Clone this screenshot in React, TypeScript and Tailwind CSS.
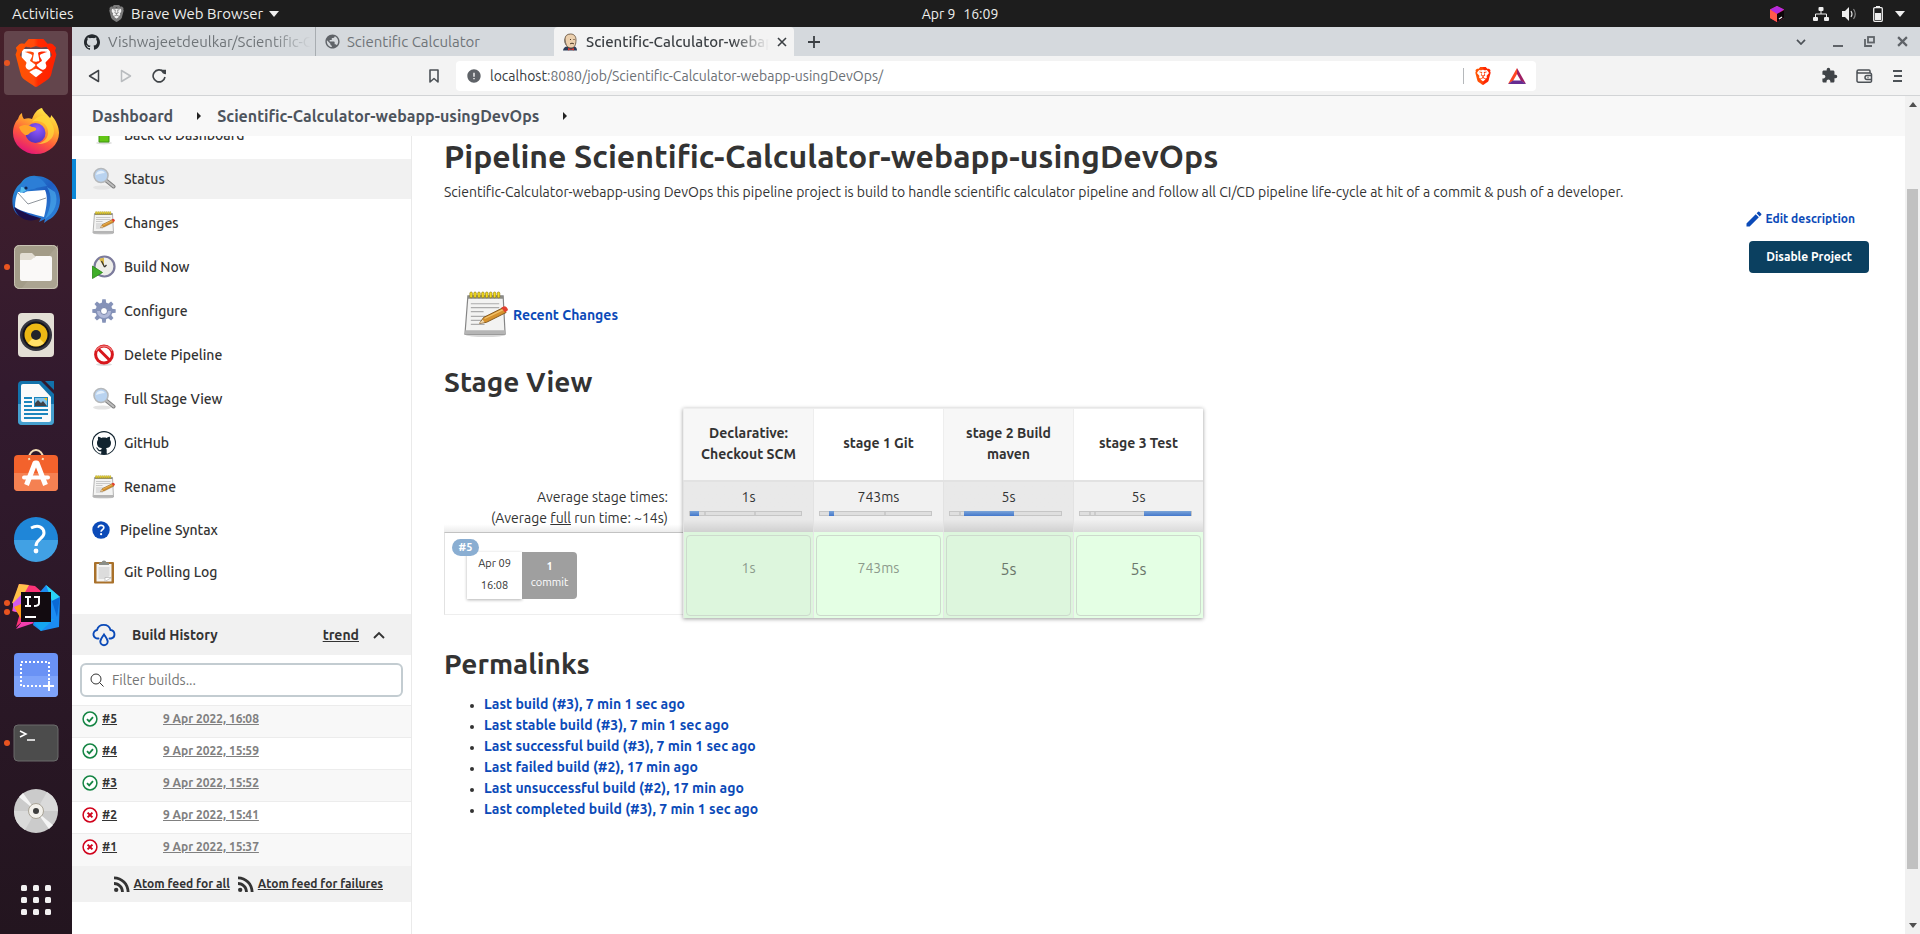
import React from "react";
import { SiBrave, SiGithub } from "react-icons/si";
import { MdExtension, MdEdit, MdRssFeed, MdPublic, MdError } from "react-icons/md";

/* ---------- small drawings ---------- */

function BraveLion({ size, plain }: { size: number; plain?: boolean }) {
  return (
    <svg viewBox="0 0 24 24" width={size} height={size} aria-hidden="true">
      <defs>
        <linearGradient id="lion" x1="0" y1="0" x2="1" y2="0">
          <stop offset="0" stopColor="#ff5500" />
          <stop offset="0.45" stopColor="#ff4a0c" />
          <stop offset="0.55" stopColor="#ff2a00" />
          <stop offset="1" stopColor="#ff2000" />
        </linearGradient>
      </defs>
      <path d="M5 5 L19 5 L19.5 14 L12 21 L4.5 14Z" fill={plain ? "#f2f2f2" : "#fff"} />
      <SiBrave size={24} fill={plain ? "#7d7d7d" : "url(#lion)"} />
    </svg>
  );
}

function Firefox() {
  return (
    <svg viewBox="0 0 48 48" width="48" height="48" aria-hidden="true">
      <defs>
        <linearGradient id="fox" x1="0.8" y1="0" x2="0.3" y2="1">
          <stop offset="0" stopColor="#fff44f" />
          <stop offset="0.35" stopColor="#ffb02e" />
          <stop offset="0.65" stopColor="#ff5a3c" />
          <stop offset="1" stopColor="#e2127a" />
        </linearGradient>
        <radialGradient id="orb" cx="0.6" cy="0.3" r="0.8">
          <stop offset="0" stopColor="#9059ff" />
          <stop offset="1" stopColor="#4a2fb8" />
        </radialGradient>
      </defs>
      <path
        d="M30 1c2 5 6 7 8 10c1-1 1-2 1-3c5 5 8 12 8 18a23 21 0 0 1-46 0c0-6 2-11 5-14c1-3 2-5 4-6c0 3 1 5 2 6c3-1 6-1 8 0c2-5 5-10 10-11z"
        fill="url(#fox)"
      />
      <circle cx="23.5" cy="26" r="10" fill="url(#orb)" />
      <path d="M7 20c5-3 10-2 13 0c3 0 5 1 4 3c-2 2-5 1-7 4c-1 1-3 1-4 1c-3-2-5-5-6-8z" fill="#ffa42a" />
      <path d="M20 15c6-3 15 0 16 9c1 7-5 12-11 13c9 1 17-5 17-13c0-6-4-10-7-14c-4-3-11 0-15 5z" fill="#ffd83a" opacity="0.75" />
    </svg>
  );
}

function Thunderbird() {
  return (
    <svg viewBox="0 0 48 48" width="48" height="48" aria-hidden="true">
      <defs>
        <linearGradient id="bird" x1="0" y1="0" x2="1" y2="1">
          <stop offset="0" stopColor="#2a9be0" />
          <stop offset="0.5" stopColor="#1f5dc0" />
          <stop offset="1" stopColor="#2f8ae0" />
        </linearGradient>
      </defs>
      <path
        d="M9 8c3-5 9-8 15-7c14 0 24 11 24 24c0 9-5 17-12 20l-4 3l1-4l-6 3l2-4C14 45 4 43 1 32C-1 23 2 13 9 8z"
        fill="url(#bird)"
      />
      <path d="M2 32c4 3 10 5 16 8l10 3c-8 5-22 3-26-11z" fill="#1c0f4a" />
      <path d="M6 17l27-2c3 6 2 16-1 27C22 39 9 37 3 32C3 26 4 21 6 17z" fill="#fff" />
      <path d="M6 18l10 11l18-6" fill="none" stroke="#8f959c" strokeWidth="1" />
      <path d="M8 17C9 9 15 2 23 2c7 1 9 5 12 9c-5 1-9 1-13 3c-4 0-7 2-10 4z" fill="#2c7ed6" />
      <path d="M8 18l1-6c3 0 5 2 5 4z" fill="#5ac0ee" />
      <circle cx="14" cy="13" r="1.6" fill="#10244f" />
      <path d="M35 12c5 7 5 20-2 32c10-6 14-18 10-27z" fill="#49a7ea" opacity="0.7" />
    </svg>
  );
}

function Files() {
  return (
    <svg viewBox="0 0 46 46" width="46" height="46" aria-hidden="true">
      <rect x="1" y="1" width="44" height="44" rx="5" fill="#a39c88" />
      <path d="M45 1v40a4 4 0 0 1-4 4H8z" fill="#b0aa98" opacity="0.6" />
      <rect x="1.5" y="1.5" width="43" height="43" rx="5" fill="none" stroke="#c9c3b4" />
      <path d="M7 11a2 2 0 0 1 2-2h10l4 4h-2v6H7z" fill="#e2ddd3" />
      <path d="M7 16h11l5-4h14a2 2 0 0 1 2 2v21a2 2 0 0 1-2 2H9a2 2 0 0 1-2-2z" fill="#faf9f8" />
    </svg>
  );
}

function Speaker() {
  return (
    <svg viewBox="0 0 46 46" width="46" height="46" aria-hidden="true">
      <rect x="5" y="1" width="36" height="44" rx="4" fill="#e3dfd5" />
      <circle cx="23" cy="23" r="16" fill="#35363f" />
      <circle cx="23" cy="23" r="13.5" fill="#14141a" />
      <circle cx="23" cy="23" r="11.5" fill="#ecb915" />
      <path d="M15 31a11.5 11.5 0 0 0 16 0L23 23z" fill="#ffe068" />
      <circle cx="23" cy="23" r="5" fill="#22242a" />
    </svg>
  );
}

function Writer() {
  return (
    <svg viewBox="0 0 46 46" width="46" height="46" aria-hidden="true">
      <path d="M9 1h19l13 13v27a4 4 0 0 1-4 4H9a4 4 0 0 1-4-4V5a4 4 0 0 1 4-4z" fill="#1272ab" />
      <path d="M5 24h36v17a4 4 0 0 1-4 4H9a4 4 0 0 1-4-4z" fill="#46a0cf" />
      <path d="M32 1h9v9z" fill="#1272ab" />
      <path d="M10 4h16l12 13v23a2 2 0 0 1-2 2H10a2 2 0 0 1-2-2V6a2 2 0 0 1 2-2z" fill="#fafafa" />
      <path d="M11 18h8M11 22h8M11 26h8M11 30h24M11 34h24M11 38h18" stroke="#1c86bd" strokeWidth="2" />
      <rect x="21" y="17" width="14" height="10" fill="#1c86bd" />
      <rect x="22" y="18" width="12" height="8" fill="#83c4ea" />
      <path d="M22 26v-3l3-3l3 3l2-2l4 5z" fill="#3f4247" />
      <path d="M31 18h3v3z" fill="#f5c211" />
    </svg>
  );
}

function Software() {
  return (
    <svg viewBox="0 0 46 46" width="46" height="46" aria-hidden="true">
      <path d="M16 10a7 8 0 0 1 14 0" fill="none" stroke="#f7e0b8" strokeWidth="2" />
      <rect x="1" y="7" width="44" height="36" rx="4" fill="#f3622c" />
      <path d="M1 25h44v14a4 4 0 0 1-4 4H5a4 4 0 0 1-4-4z" fill="#f58152" />
      <path d="M16 10a7 8 0 0 0 .5 2M30 10a7 8 0 0 1-.5 2" fill="none" stroke="#f7e0b8" strokeWidth="2" />
      <path d="M13.500 37L22 15h2l8.500 22" fill="none" stroke="#fff" strokeWidth="5" strokeLinejoin="round" />
      <path d="M11 29.500h24" stroke="#fff" strokeWidth="4" strokeLinecap="round" />
    </svg>
  );
}

function HelpApp() {
  return (
    <svg viewBox="0 0 46 46" width="46" height="46" aria-hidden="true">
      <circle cx="23" cy="23" r="22" fill="#1f86d8" />
      <path d="M1 24a22 22 0 0 0 44 0z" fill="#41a1e4" />
      <path d="M18 12c8-4 13 0 13 5c0 6-8 6-8 13" fill="none" stroke="#fff" strokeWidth="3" />
      <circle cx="23" cy="35" r="2.400" fill="#fff" />
    </svg>
  );
}

function IntelliJ() {
  return (
    <svg viewBox="0 0 48 48" width="48" height="48" aria-hidden="true">
      <path d="M7 1l16 2l8 7L20 30L4 44l4-14L0 28l2-9z" fill="#fc3378" />
      <path d="M7 1l10 1L6 22L0 20z" fill="#ffc24a" />
      <path d="M1 20l8-8v18L1 28z" fill="#d25cf0" />
      <path d="M2 24l7-3v15z" fill="#ff9b1a" />
      <path d="M28 9l6-7l14 12l-1 30l-18 4l-8-6z" fill="#1b8cf2" />
      <path d="M34 2l14 12l-8 4z" fill="#2ad4f5" />
      <path d="M40 18l8-4l-3 20z" fill="#0a6ad6" />
      <path d="M22 40l20-4l-13 12z" fill="#14a5f0" />
      <path d="M9 30v10l-5 6l18-6z" fill="#f43fb0" />
      <rect x="9" y="9" width="30" height="30" fill="#120b10" />
      <path d="M13 14h6M16 14v9M13 23h6M22 14h5v6q0 3-5 3" fill="none" stroke="#fff" strokeWidth="2" />
      <path d="M13 34h11" stroke="#fff" strokeWidth="2" />
    </svg>
  );
}

function ScreenshotApp() {
  return (
    <svg viewBox="0 0 46 46" width="46" height="46" aria-hidden="true">
      <rect x="1" y="1" width="44" height="44" rx="4" fill="#6a92f5" />
      <path d="M1 24h44v17a4 4 0 0 1-4 4H5a4 4 0 0 1-4-4z" fill="#7ea3fa" />
      <rect x="8" y="10" width="28" height="24" fill="none" stroke="#fff" strokeWidth="2" strokeDasharray="2 2" />
      <path d="M36 29v10M31 34h10" stroke="#fff" strokeWidth="2" />
    </svg>
  );
}

function TerminalApp() {
  return (
    <svg viewBox="0 0 46 46" width="46" height="46" aria-hidden="true">
      <rect x="1" y="5" width="44" height="36" rx="4" fill="#4c4c4c" stroke="#6b6b6b" />
      <path d="M7 11l6 3l-6 3M14 20h8" fill="none" stroke="#fff" strokeWidth="1.500" />
    </svg>
  );
}

function Disc() {
  return (
    <svg viewBox="0 0 46 46" width="46" height="46" aria-hidden="true">
      <circle cx="23" cy="23" r="22" fill="#cbcbcb" />
      <path d="M23 23L6 9L10 5zM23 23L40 37L36 41z" fill="#f4f4f4" />
      <path d="M23 23L1 23A22 22 0 0 0 12 42zM23 23L45 23A22 22 0 0 0 34 4z" fill="#dadada" />
      <circle cx="23" cy="23" r="7.500" fill="#f3f1ec" stroke="#a9a396" />
      <circle cx="23" cy="23" r="3" fill="#3e3e3e" />
    </svg>
  );
}

function AppGrid() {
  return (
    <svg viewBox="0 0 32 32" width="32" height="32" aria-hidden="true" fill="#f2f0f1">
      {[1, 13, 25].map((y) =>
        [1, 13, 25].map((x) => <rect key={`${x}-${y}`} x={x} y={y} width="6" height="6" rx="1.500" />)
      )}
    </svg>
  );
}

function Magnifier() {
  return (
    <svg viewBox="0 0 24 24" width="24" height="24" aria-hidden="true">
      <ellipse cx="10" cy="20.500" rx="9" ry="2" fill="#e4e4e4" />
      <path d="M13.500 13L21.500 19.500" stroke="#7f7f7f" strokeWidth="4" strokeLinecap="round" />
      <path d="M13.500 13L21.500 19.500" stroke="#bdbdbd" strokeWidth="2" strokeLinecap="round" />
      <circle cx="9" cy="8.500" r="7" fill="#b9d3f0" stroke="#b5b8bb" strokeWidth="1.600" />
      <path d="M4 8a5 5 0 0 1 9-2c-3 0-6 1-9 2z" fill="#e3effb" />
    </svg>
  );
}

function Notepad({ size = 24 }: { size?: number }) {
  return (
    <svg viewBox="0 0 48 48" width={size} height={size} aria-hidden="true">
      <ellipse cx="23" cy="45" rx="20" ry="2" fill="#d8d8d8" />
      <path d="M5 5h36l2 39H2z" fill="#f3f3f2" stroke="#858585" strokeWidth="1.200" />
      <path d="M2.500 40h40l.5 4H2z" fill="#b5b5b5" />
      <path d="M5 5h36v3H5z" fill="#8c8c86" />
      {[7, 11, 15, 19, 23, 27, 31, 35].map((x) => (
        <rect key={x} x={x} y="1" width="2.600" height="6" rx="1.300" fill="#f4dc1e" stroke="#857108" strokeWidth="0.600" />
      ))}
      <path d="M8 13h29M8 17h29M8 21h13M8 26h21M8 30h16M8 34h14" stroke="#acacac" strokeWidth="1.200" />
      <path d="M17 33l4-6l20-10l3 5l-20 10z" fill="#d6922d" stroke="#7a4d12" strokeWidth="0.900" />
      <path d="M22 28l19-9" stroke="#f3c46e" strokeWidth="1.200" />
      <path d="M39 17l3-1.500q3 0 4 4L43 22z" fill="#e2402f" />
      <path d="M17 33l3-4l2 3z" fill="#f0d9b0" />
    </svg>
  );
}

function BuildClock() {
  return (
    <svg viewBox="0 0 24 24" width="24" height="24" aria-hidden="true">
      <circle cx="12.500" cy="11.500" r="10" fill="#eeeeea" stroke="#7c7b9c" strokeWidth="2.200" />
      <path d="M12 12L7 4a8 8 0 0 1 5-1z" fill="#d9b84a" />
      <path d="M12.500 12l-3-6M12.500 12l2-2" stroke="#333" strokeWidth="1.200" />
      <path d="M.500 11l10 6.500l-10 6z" fill="#3fae29" stroke="#2a8416" strokeWidth="0.800" />
    </svg>
  );
}

function Gear() {
  return (
    <svg viewBox="0 0 24 24" width="24" height="24" aria-hidden="true">
      <g fill="#8592b8">
        {[0, 45, 90, 135, 180, 225, 270, 315].map((a) => (
          <path key={a} d="M9.500 6L10.300 0.300h3.400L14.500 6z" transform={`rotate(${a} 12 12)`} />
        ))}
        <circle cx="12" cy="12" r="8.500" />
      </g>
      <path d="M5 12a7 7 0 0 0 14 0z" fill="#b1b9d8" />
      <circle cx="12" cy="12" r="3.500" fill="#fff" stroke="#7784aa" />
    </svg>
  );
}

function NoEntry() {
  return (
    <svg viewBox="0 0 24 24" width="24" height="24" aria-hidden="true">
      <ellipse cx="12" cy="21.500" rx="8" ry="1.500" fill="#ddd" />
      <circle cx="12" cy="11.500" r="8.400" fill="#fff" stroke="#d8171c" strokeWidth="3" />
      <path d="M6.500 6l11 11" stroke="#d8171c" strokeWidth="3" />
      <path d="M4 8a9 9 0 0 1 16 0" fill="none" stroke="#ef7d7d" strokeWidth="1.400" />
    </svg>
  );
}

function OctoRound() {
  return (
    <span className="flex size-6 items-center justify-center rounded-full bg-[#11232f]">
      <SiGithub size={22} color="#fff" />
    </span>
  );
}

function HelpDot() {
  return (
    <svg viewBox="0 0 18 18" width="18" height="18" aria-hidden="true">
      <circle cx="9" cy="9" r="8.700" fill="#0b4ab8" />
      <path d="M6.300 6.800c0-3.400 5.600-3.300 5.500 0c0 1.900-2.700 1.900-2.700 4" fill="none" stroke="#fff" strokeWidth="1.700" />
      <circle cx="9.100" cy="13.200" r="1.100" fill="#fff" />
    </svg>
  );
}

function Clipboard() {
  return (
    <svg viewBox="0 0 24 24" width="24" height="24" aria-hidden="true">
      <rect x="2" y="2" width="20" height="21.500" rx="1" fill="#a9712a" />
      <rect x="4.500" y="4" width="15" height="17.500" fill="#f4f4f3" />
      <path d="M6.500 7h11v9l-4 3h-7z" fill="#dcdcdc" />
      <path d="M13 21.500v-4h6.500z" fill="#fff" stroke="#aaa" strokeWidth="0.600" />
      <path d="M7 5V2.500h2.500Q10 .5 12 .5t2.500 2H17V5z" fill="#8b8e88" />
    </svg>
  );
}

function UpArrow() {
  return (
    <svg viewBox="0 0 24 24" width="24" height="24" aria-hidden="true">
      <ellipse cx="12" cy="20" rx="8" ry="1.500" fill="#ddd" />
      <path d="M12 1l9 9h-4v9H7v-9H3z" fill="#62c615" stroke="#3c9410" />
    </svg>
  );
}

function CloudDrop() {
  return (
    <svg viewBox="0 0 24 24" width="24" height="24" aria-hidden="true" fill="none" stroke="#0b4ab8" strokeWidth="1.900">
      <path d="M6.500 16.500A4.300 4.300 0 0 1 5 8a7 7 0 0 1 13.500 0a4.300 4.300 0 0 1 .5 8.500h-1.500" strokeLinecap="round" transform="translate(0 -1)" />
      <path d="M12 11.500c2 3 3.700 5 3.700 7a3.700 3.700 0 0 1-7.400 0c0-2 1.700-4 3.700-7z" />
    </svg>
  );
}

function StatusIcon({ ok }: { ok: boolean }) {
  const tone = ok ? "#158544" : "#d0021b";
  return (
    <svg viewBox="0 0 16 16" width="16" height="16" role="img" aria-label={ok ? "Success" : "Failed"}>
      <circle cx="8" cy="8" r="6.900" fill="#fff" stroke={tone} strokeWidth="1.500" />
      {ok ? (
        <path d="M5 8.200l2.200 2.200L11 6.200" fill="none" stroke={tone} strokeWidth="1.800" />
      ) : (
        <path d="M5.600 5.600l4.800 4.800M10.400 5.600l-4.800 4.800" stroke={tone} strokeWidth="2" />
      )}
    </svg>
  );
}

function Butler() {
  return (
    <svg viewBox="0 0 16 18" width="16" height="18" aria-hidden="true">
      <path d="M1 17.500c0-2 2-4 4-4h7c2 0 3 2 3 4z" fill="#2c3c58" />
      <path d="M3 6c0-3 2-5 5.500-5S14 3 14 7s-1 8-5 8s-6-4-6-9z" fill="#ecd0ae" stroke="#5a4632" strokeWidth="0.800" />
      <path d="M2.500 5c-1 3 0 6 2 8c0-3-1-5-2-8z" fill="#7f7569" />
      <path d="M8 6.500h1M11.500 6.500h1M8 11c1-1 3-1 4 0" stroke="#4a3826" strokeWidth="1" fill="none" />
      <path d="M6 15l3 1l3-1v2.500l-3-1l-3 1z" fill="#d33833" />
    </svg>
  );
}

/* ---------- data ---------- */

const dockApps = [
  { name: "Brave", icon: <BraveLion size={48} />, dots: 1, active: true },
  { name: "Firefox", icon: <Firefox />, dots: 0 },
  { name: "Thunderbird", icon: <Thunderbird />, dots: 0 },
  { name: "Files", icon: <Files />, dots: 1 },
  { name: "Rhythmbox", icon: <Speaker />, dots: 0 },
  { name: "LibreOffice Writer", icon: <Writer />, dots: 0 },
  { name: "Ubuntu Software", icon: <Software />, dots: 0 },
  { name: "Help", icon: <HelpApp />, dots: 0 },
  { name: "IntelliJ IDEA", icon: <IntelliJ />, dots: 2 },
  { name: "Screenshot", icon: <ScreenshotApp />, dots: 0 },
  { name: "Terminal", icon: <TerminalApp />, dots: 1 },
  { name: "Disc", icon: <Disc />, dots: 0 },
];

const tasks = [
  { label: "Back to Dashboard", icon: <UpArrow /> },
  { label: "Status", icon: <Magnifier />, active: true },
  { label: "Changes", icon: <Notepad /> },
  { label: "Build Now", icon: <BuildClock /> },
  { label: "Configure", icon: <Gear /> },
  { label: "Delete Pipeline", icon: <NoEntry /> },
  { label: "Full Stage View", icon: <Magnifier /> },
  { label: "GitHub", icon: <OctoRound /> },
  { label: "Rename", icon: <Notepad /> },
  { label: "Pipeline Syntax", icon: <HelpDot />, small: true },
  { label: "Git Polling Log", icon: <Clipboard /> },
];

const builds = [
  { id: "#5", date: "9 Apr 2022, 16:08", ok: true },
  { id: "#4", date: "9 Apr 2022, 15:59", ok: true },
  { id: "#3", date: "9 Apr 2022, 15:52", ok: true },
  { id: "#2", date: "9 Apr 2022, 15:41", ok: false },
  { id: "#1", date: "9 Apr 2022, 15:37", ok: false },
];

const stages = [
  { name: "Declarative: Checkout SCM", time: "1s", start: 0, end: 8, ticks: [13, 58], slow: false },
  { name: "stage 1 Git", time: "743ms", start: 8, end: 13, ticks: [58], slow: false },
  { name: "stage 2 Build maven", time: "5s", start: 13, end: 58, ticks: [8], slow: true },
  { name: "stage 3 Test", time: "5s", start: 58, end: 100, ticks: [8, 13], slow: true },
];

const permalinks = [
  "Last build (#3), 7 min 1 sec ago",
  "Last stable build (#3), 7 min 1 sec ago",
  "Last successful build (#3), 7 min 1 sec ago",
  "Last failed build (#2), 17 min ago",
  "Last unsuccessful build (#2), 17 min ago",
  "Last completed build (#3), 7 min 1 sec ago",
];

/* ---------- desktop shell ---------- */

function TopBar() {
  return (
    <header className="grid h-[27px] shrink-0 grid-cols-[1fr_auto_1fr] items-center bg-[#1d1d1d] text-[15px] leading-5 text-[#eeeeec]">
      <div className="flex items-center pl-3">
        <button type="button" className="w-24 text-left">Activities</button>
        <button type="button" className="flex items-center gap-1.5">
          <BraveLion size={17} plain />
          Brave Web Browser
          <svg viewBox="0 0 10 6" width="10" height="6" aria-hidden="true"><path d="M0 0h10L5 6z" fill="#eee" /></svg>
        </button>
      </div>
      <button type="button" className="flex gap-2 text-sm"><span>Apr 9</span><span>16:09</span></button>
      <div className="flex items-center justify-end pr-[15px]">
        <svg viewBox="0 0 16 16" width="16" height="16" className="mr-7" aria-hidden="true">
          <path d="M8 0l7 3.500v8.500L8 16l-7-4V3.500z" fill="#f5276a" />
          <path d="M8 0l7 3.500L8 8L1 3.500z" fill="#b42be0" />
          <path d="M1 3.500L8 8v8l-7-4z" fill="#ff5a4a" />
          <path d="M8 8l7-4v8l-7 4z" fill="#0d0509" />
          <path d="M10 13l3-2" stroke="#fff" strokeWidth="1.200" />
        </svg>
        <svg viewBox="0 0 16 14" width="16" height="14" className="mr-3" aria-hidden="true" fill="#eee">
          <rect x="5.500" y="0" width="5" height="4" rx="1" /><rect x="0" y="10" width="5" height="4" rx="1" /><rect x="11" y="10" width="5" height="4" rx="1" />
          <path d="M8 4v3M2.500 10V7h11v3" fill="none" stroke="#eee" />
        </svg>
        <svg viewBox="0 0 16 16" width="16" height="16" className="mr-4" aria-hidden="true">
          <path d="M1 5h3l4-4v14l-4-4H1z" fill="#eee" />
          <path d="M10 5q2 3 0 6" fill="none" stroke="#ddd" strokeWidth="1.200" />
          <path d="M12.500 3q3.500 5 0 10" fill="none" stroke="#888" strokeWidth="1.200" />
        </svg>
        <svg viewBox="0 0 10 16" width="10" height="16" className="mr-3" aria-hidden="true">
          <path d="M3 0h4v2H3z" fill="#eee" /><rect x="0.700" y="1.700" width="8.600" height="13.600" rx="1" fill="none" stroke="#eee" strokeWidth="1.300" /><path d="M2 7h6v7H2z" fill="#eee" />
        </svg>
        <svg viewBox="0 0 10 6" width="10" height="6" aria-hidden="true"><path d="M0 0h10L5 6z" fill="#eee" /></svg>
      </div>
    </header>
  );
}

function Dock() {
  return (
    <nav aria-label="Dock" className="flex w-[72px] shrink-0 flex-col items-stretch bg-linear-to-b from-[#46202a] via-[#321a2e] via-40% to-[#23151f]">
      <ul className="flex flex-col pt-0.5">
        {dockApps.map((app) => (
          <li key={app.name} className="relative flex h-[68px] items-center justify-center">
            <button
              type="button"
              aria-label={app.name}
              className={`flex size-16 items-center justify-center rounded ${app.active ? "bg-[#63454c]" : ""}`}
            >
              {app.icon}
            </button>
            {app.dots > 0 && (
              <span className="absolute inset-y-0 left-1 flex flex-col justify-center gap-[3px]">
                {Array.from({ length: app.dots }, (_, i) => (
                  <span key={i} className="size-1.5 rounded-full bg-[#e95420]" />
                ))}
              </span>
            )}
          </li>
        ))}
      </ul>
      <button type="button" aria-label="Show Applications" className="mt-auto flex h-[68px] items-center justify-center">
        <AppGrid />
      </button>
    </nav>
  );
}

/* ---------- browser ---------- */

function TabStrip() {
  return (
    <div role="tablist" className="flex h-[29px] shrink-0 items-stretch bg-[#d5d9dd] text-[15px] leading-5 text-[#6f7478]">
      <button role="tab" aria-selected="false" type="button" className="flex w-[244px] items-center gap-2 border-r border-[#a8adb1] pl-3 pr-1">
        <SiGithub size={16} className="shrink-0" color="#24292e" />
        <span className="overflow-hidden whitespace-nowrap mask-r-from-80%">Vishwajeetdeulkar/Scientific-Calculator</span>
      </button>
      <button role="tab" aria-selected="false" type="button" className="flex w-[238px] items-center gap-1.5 pl-2">
        <MdPublic size={17} color="#5f6368" />
        <span>Scientific Calculator</span>
      </button>
      <div className="flex w-60 items-center rounded-t bg-[#f3f3f3] pl-2 pr-[7px] text-[#3b3f43]">
        <button role="tab" aria-selected="true" type="button" className="flex min-w-0 flex-1 items-center gap-2">
          <span className="shrink-0"><Butler /></span>
          <span className="overflow-hidden whitespace-nowrap font-medium mask-r-from-80%">Scientific-Calculator-webapp-usingDevOps</span>
        </button>
        <button type="button" aria-label="Close tab" className="ml-2">
          <svg viewBox="0 0 10 10" width="10" height="10" aria-hidden="true"><path d="M1 1l8 8M9 1l-8 8" stroke="#3b3f43" strokeWidth="1.600" /></svg>
        </button>
      </div>
      <button type="button" aria-label="New tab" className="ml-3.5">
        <svg viewBox="0 0 12 12" width="12" height="12" aria-hidden="true"><path d="M6 0v12M0 6h12" stroke="#3b3f43" strokeWidth="1.800" /></svg>
      </button>
      <div className="ml-auto flex items-center pr-3">
        <button type="button" aria-label="Search tabs" className="mr-[26px]">
          <svg viewBox="0 0 10 6" width="10" height="6" aria-hidden="true"><path d="M1 .8L5 5L9 .8" fill="none" stroke="#4d5257" strokeWidth="1.700" /></svg>
        </button>
        <button type="button" aria-label="Minimize" className="mr-5">
          <svg viewBox="0 0 12 12" width="12" height="12" aria-hidden="true"><path d="M1 10h10" stroke="#5f6368" strokeWidth="2" /></svg>
        </button>
        <button type="button" aria-label="Restore" className="mr-[22px]">
          <svg viewBox="0 0 11 11" width="11" height="11" aria-hidden="true" fill="none" stroke="#5f6368" strokeWidth="1.800"><rect x="4" y="1" width="6" height="5.500" /><path d="M1 3v7h7" /></svg>
        </button>
        <button type="button" aria-label="Close window">
          <svg viewBox="0 0 10 10" width="11" height="11" aria-hidden="true"><path d="M1 1l8 8M9 1l-8 8" stroke="#5f6368" strokeWidth="2" /></svg>
        </button>
      </div>
    </div>
  );
}

function Toolbar() {
  return (
    <div className="flex h-10 shrink-0 items-center border-b border-[#d2d4d6] bg-[#f3f3f3] px-4">
      <div className="flex flex-1 items-center gap-5">
        <button type="button" aria-label="Back">
          <svg viewBox="0 0 12 14" width="12" height="14" aria-hidden="true"><path d="M10.500 1.500v11L1.500 7z" fill="none" stroke="#3f4347" strokeWidth="1.500" strokeLinejoin="round" /></svg>
        </button>
        <button type="button" aria-label="Forward">
          <svg viewBox="0 0 12 14" width="12" height="14" aria-hidden="true"><path d="M1.500 1.500v11l9-5.500z" fill="none" stroke="#b9bcbf" strokeWidth="1.500" strokeLinejoin="round" /></svg>
        </button>
        <button type="button" aria-label="Reload">
          <svg viewBox="0 0 14 14" width="14" height="14" aria-hidden="true"><path d="M11.500 2.800A6 6 0 1 0 13 8" fill="none" stroke="#3f4347" strokeWidth="1.600" /><path d="M9 .8h5v4.500q-4 0-5-4.500z" fill="#3f4347" /></svg>
        </button>
        <button type="button" aria-label="Bookmark" className="ml-auto mr-[17px]">
          <svg viewBox="0 0 10 14" width="10" height="14" aria-hidden="true"><path d="M1 1h8v12L5 9.500L1 13z" fill="none" stroke="#4d5257" strokeWidth="1.600" strokeLinejoin="round" /></svg>
        </button>
      </div>
      <div className="flex h-[30px] w-full max-w-[1080px] items-center rounded bg-white pl-2.5 pr-2.5">
        <MdError size={16} color="#5f6368" />
        <p className="ml-2 flex-1 text-sm text-[#6b7075]">
          <span className="text-[#36393d]">localhost</span>:8080/job/Scientific-Calculator-webapp-usingDevOps/
        </p>
        <span className="mr-2.5 h-4 w-px bg-[#b5b8bb]" />
        <button type="button" aria-label="Brave Shields"><BraveLion size={18} /></button>
        <button type="button" aria-label="Brave Rewards" className="ml-4">
          <svg viewBox="0 0 18 16" width="18" height="16" aria-hidden="true">
            <path d="M9 0L0 16l5-3l4-7z" fill="#ff4724" /><path d="M9 0l9 16l-5-3l-4-7z" fill="#9e1f63" /><path d="M0 16h18l-5-3.500H5z" fill="#662d91" />
          </svg>
        </button>
      </div>
      <div className="flex flex-1 items-center justify-end gap-[18px]">
        <button type="button" aria-label="Extensions"><MdExtension size={17} color="#3f4347" /></button>
        <button type="button" aria-label="Wallet">
          <svg viewBox="0 0 17 14" width="17" height="14" aria-hidden="true" fill="none" stroke="#4d5257" strokeWidth="1.500"><path d="M14 3.500V2a1 1 0 0 0-1-1H2.500a1.500 1.500 0 0 0 0 3H14a1.500 1.500 0 0 1 1.500 1.500V12A1.200 1.200 0 0 1 14 13.200H2.500A1.500 1.500 0 0 1 1 12V2.500" /><path d="M16 6.500h-5a2 2 0 0 0 0 4h5M11.500 8.500h1" /></svg>
        </button>
        <button type="button" aria-label="Menu" className="pl-0.5 pr-px">
          <svg viewBox="0 0 10 12" width="10" height="12" aria-hidden="true"><path d="M0 1h9M1 6h8M0 11h9" stroke="#4d5257" strokeWidth="1.800" /></svg>
        </button>
      </div>
    </div>
  );
}

function Breadcrumbs() {
  const mark = <svg viewBox="0 0 4 8" width="4" height="8" aria-hidden="true"><path d="M0 0l4 4l-4 4z" fill="#222" /></svg>;
  return (
    <nav aria-label="Breadcrumb" className="flex h-10 shrink-0 items-center gap-6 bg-[#f8f8f8] px-5 text-base font-semibold text-[#4d545d]">
      <a href="#">Dashboard</a>
      {mark}
      <a href="#" className="-ml-2">Scientific-Calculator-webapp-usingDevOps</a>
      {mark}
    </nav>
  );
}

/* ---------- page ---------- */

function Sidebar() {
  return (
    <aside className="w-[340px] shrink-0 border-r border-[#eaeaea]">
      <ul className="-mt-[21px] flex flex-col gap-1">
        {tasks.map((t) => (
          <li key={t.label}>
            <a
              href="#"
              className={`flex items-center gap-2 border-l-4 pl-4 text-sm font-medium ${
                t.active ? "border-[#0b88d8] bg-[#f1f1f1]" : "border-transparent"
              } ${t.small ? "h-[37px] gap-2.5" : "h-10"}`}
            >
              {t.icon}
              {t.label}
            </a>
          </li>
        ))}
      </ul>
      <section className="mt-[22px]">
        <div className="flex h-[41px] items-center bg-[#f1f1f1] pl-5 pr-[26px] text-sm font-semibold">
          <CloudDrop />
          <h2 className="ml-4 flex-1">Build History</h2>
          <a href="#" className="underline">trend</a>
          <button type="button" aria-label="Collapse" className="ml-3.5">
            <svg viewBox="0 0 12 8" width="12" height="8" aria-hidden="true"><path d="M1 7l5-5l5 5" fill="none" stroke="#333" strokeWidth="1.900" /></svg>
          </button>
        </div>
        <label className="mx-2 my-2 flex h-[34px] items-center gap-2 rounded-md border-2 border-[#c3ccd1] px-2">
          <svg viewBox="0 0 14 14" width="14" height="14" aria-hidden="true" fill="none" stroke="#333"><circle cx="6" cy="6" r="5" /><path d="M9.500 9.500L13.500 13.500" /></svg>
          <input type="search" aria-label="Filter builds" placeholder="Filter builds..." className="min-w-0 flex-1 bg-transparent text-sm outline-none placeholder:text-[#757575]" />
        </label>
        <table className="w-full border-collapse text-xs font-semibold">
          <tbody>
            {builds.map((b) => (
              <tr key={b.id} className="h-8 border-t border-[#ececec] odd:bg-[#f8f8f8]">
                <td className="w-[91px] pb-1.5 pl-2.5">
                  <span className="flex items-center gap-1"><StatusIcon ok={b.ok} /><a href="#" className="underline">{b.id}</a></span>
                </td>
                <td className="pb-1.5 text-[#808080]"><a href="#" className="underline">{b.date}</a></td>
              </tr>
            ))}
          </tbody>
        </table>
        <div className="flex h-9 items-center justify-end gap-1 bg-[#f1f1f1] pr-7 text-xs font-semibold">
          <a href="#" className="flex items-center"><MdRssFeed size={24} /><span className="underline">Atom feed for all</span></a>
          <a href="#" className="flex items-center"><MdRssFeed size={24} /><span className="underline">Atom feed for failures</span></a>
        </div>
      </section>
    </aside>
  );
}

function StageView() {
  return (
    <div className="relative mt-2.5 w-fit">
      <table className="table-fixed border-separate border-spacing-0 text-center text-sm leading-[21px]">
        <colgroup>
          <col className="w-[239px]" />
          {stages.map((s) => <col key={s.name} className="w-[130px]" />)}
        </colgroup>
        <thead>
          <tr className="h-[72px]">
            <td />
            {stages.map((s) => (
              <th key={s.name} scope="col" className="border-l border-t border-[#eeeeee] px-2 pb-0.5 font-semibold even:bg-[#f7f7f7]">{s.name}</th>
            ))}
          </tr>
        </thead>
        <tbody>
          <tr className="h-[52px]">
            <td className="bg-linear-to-b from-white from-85% to-[#ececec] pr-[15px] pt-1 text-right">
              <div>Average stage times:</div>
              <div>(Average <span className="underline">full</span> run time: ~14s)</div>
            </td>
            {stages.map((s) => (
              <td key={s.name} className="border-l border-t-2 border-[#e2e2e2] bg-linear-to-b from-[#f1f1f1] from-75% to-[#dadada] px-[5px] pb-3 even:from-[#e9e9e9] even:to-[#d0d0d0]">
                <div className="mb-[3px]">{s.time}</div>
                <div className="relative mr-1.5 h-[5px] border border-[#c6c6c6] bg-[#dfdfdf]">
                  {s.ticks.map((x) => (
                    <span key={x} className="absolute inset-y-0 w-0.5 bg-[#cbcbcb]" style={{ left: `${x}%` }} />
                  ))}
                  <span
                    className="absolute -inset-y-px bg-linear-to-b from-[#7ba4d8] to-[#4478cc]"
                    style={{ left: `${s.start}%`, width: `${s.end - s.start}%` }}
                  />
                </div>
              </td>
            ))}
          </tr>
          <tr className="h-[86px]">
            <td className="pb-[3px] align-top">
              <div className="h-[83px] border-b border-l border-t border-b-[#eeeeee] border-l-[#e2e2e2] border-t-[#c2c2c2] pl-[22px] pt-[19px] text-left">
                <div className="relative flex w-fit text-center text-[11px]">
                  <div className="h-[47px] w-[55px] bg-white leading-[22px] text-[#333] shadow-[0_1px_3px_#0000004d]">
                    <div>Apr 09</div>
                    <div>16:08</div>
                  </div>
                  <div className="h-[47px] w-[55px] rounded-r bg-[#9f9f9f] pt-1.5 leading-4 text-white">
                    <div className="font-bold">1</div>
                    <div>commit</div>
                  </div>
                  <span className="absolute -left-[15px] -top-[13px] flex h-[17px] w-[27px] items-center justify-center rounded-full bg-[#8aaed2] font-bold text-white">#5</span>
                </div>
              </div>
            </td>
            {stages.map((s) => (
              <td key={s.name} className="border-l border-[#e6e6e6] bg-[#e4ffe4] p-0.5 pt-[3px] even:bg-[#ddf6dd]">
                <div className={`flex h-[81px] items-center justify-center rounded border border-[#cddacd] pb-3.5 ${s.slow ? "text-base text-[#6c786c]" : "text-[#8c9a8c]"}`}>
                  {s.time}
                </div>
              </td>
            ))}
          </tr>
        </tbody>
      </table>
      <div className="pointer-events-none absolute inset-y-0 right-0 w-[520px] shadow-[0_1px_4px_#00000066]" />
    </div>
  );
}

function Main() {
  return (
    <main className="min-w-0 flex-1 pl-8 pr-9">
      <h1 className="text-[32px] font-bold leading-[40px]">Pipeline Scientific-Calculator-webapp-usingDevOps</h1>
      <p className="mt-1.5 text-sm leading-[21px]">
        Scientific-Calculator-webapp-using DevOps this pipeline project is build to handle scientific calculator pipeline and follow all CI/CD pipeline life-cycle at hit of a commit &amp; push of a developer.
      </p>
      <div className="mt-1.5 flex flex-col items-end gap-3 text-xs font-semibold">
        <a href="#" className="flex h-5 items-center gap-0.5 pr-3.5 text-[#0b4ab8]"><MdEdit size={20} />Edit description</a>
        <button type="button" className="h-8 rounded bg-[#0b4060] px-[17px] text-white">Disable Project</button>
      </div>
      <a href="#" className="ml-[19px] mt-[18px] flex w-fit items-center gap-[3px] text-sm font-semibold text-[#0b4ab8]">
        <Notepad size={47} />
        Recent Changes
      </a>
      <h2 className="mt-7 text-[28px] font-bold leading-8">Stage View</h2>
      <StageView />
      <h2 className="mt-[30px] text-[28px] font-bold leading-8">Permalinks</h2>
      <ul className="mt-[14px] list-disc pl-10 text-sm font-semibold leading-[21px] marker:text-xs">
        {permalinks.map((p) => (
          <li key={p}><a href="#" className="text-[#0b4ab8]">{p}</a></li>
        ))}
      </ul>
    </main>
  );
}

function Scrollbar() {
  return (
    <div aria-hidden="true" className="flex w-[15px] shrink-0 flex-col items-center bg-[#f1f1f1] py-1.5">
      <svg viewBox="0 0 8 5" width="8" height="5"><path d="M4 0l4 5H0z" fill="#505050" /></svg>
      <div className="mb-[54px] mt-[82px] w-[11px] flex-1 bg-[#c1c1c1]" />
      <svg viewBox="0 0 8 5" width="8" height="5"><path d="M4 5L0 0h8z" fill="#505050" /></svg>
    </div>
  );
}

export default function App() {
  return (
    <div className="flex h-screen flex-col overflow-hidden font-['Ubuntu','Noto_Sans',sans-serif] text-[#333]">
      <TopBar />
      <div className="flex min-h-0 flex-1">
        <Dock />
        <div className="flex min-w-0 flex-1 flex-col bg-white">
          <TabStrip />
          <Toolbar />
          <div className="flex min-h-0 flex-1">
            <div className="flex min-w-0 flex-1 flex-col">
              <Breadcrumbs />
              <div className="flex min-h-0 flex-1 overflow-hidden">
                <Sidebar />
                <Main />
              </div>
            </div>
            <Scrollbar />
          </div>
        </div>
      </div>
    </div>
  );
}
